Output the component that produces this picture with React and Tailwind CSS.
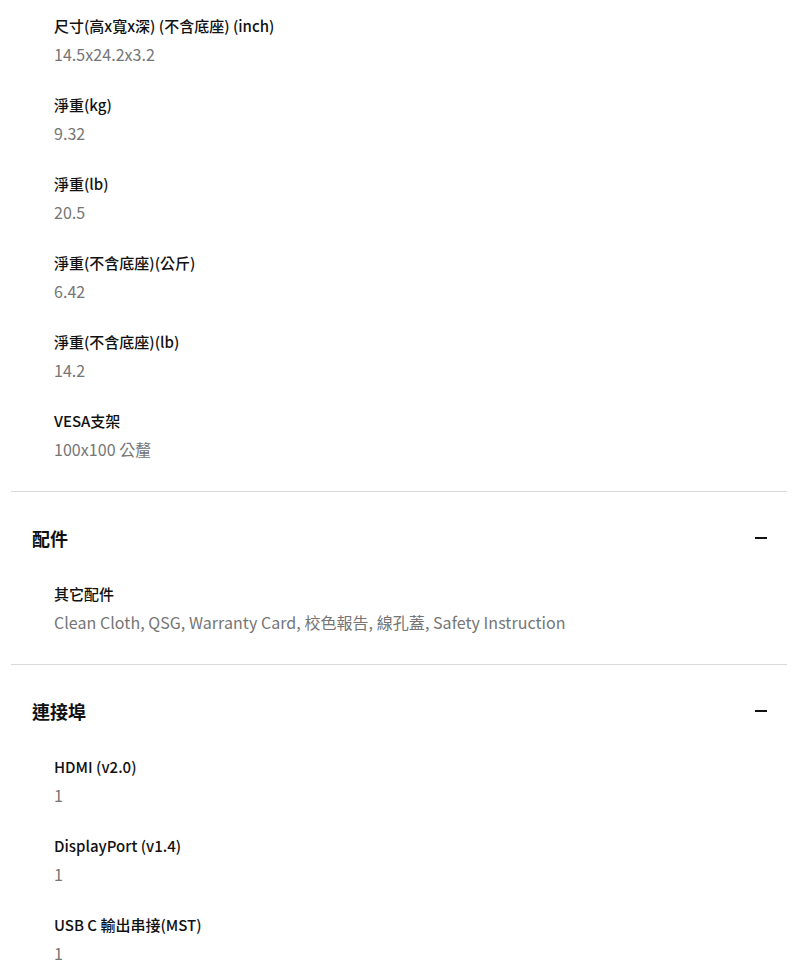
const font = { fontFamily: '"Noto Sans CJK TC", "Noto Sans", sans-serif' };

function Item({ label, value }) {
  return (
    <div className="flex flex-col pl-[54px] pb-[23px] last:pb-[28px]">
      <div className="text-[15px] leading-[28px] font-medium text-[#111111]">{label}</div>
      <div className="text-[16px] leading-[28px] text-[#757575] tracking-[0.05px]">{value}</div>
    </div>
  );
}

function Section({ title, children }) {
  return (
    <div className="border-t border-[#d9d9d9] ml-[11px] mr-[13px]">
      <div className="flex items-center justify-between pl-[21px] pr-[20px] pt-[32px] pb-[28px]">
        <div className="text-[18px] leading-[28px] font-bold text-[#111111]">{title}</div>
        <div className="w-[12px] h-[2px] bg-[#111111]" />
      </div>
      <div className="-ml-[11px]">{children}</div>
    </div>
  );
}

export default function App() {
  return (
    <div className="bg-white w-[800px] min-h-[975px]" style={font}>
      <div className="pt-[12px]">
        <Item label="尺寸(高x寬x深) (不含底座) (inch)" value="14.5x24.2x3.2" />
        <Item label="淨重(kg)" value="9.32" />
        <Item label="淨重(lb)" value="20.5" />
        <Item label="淨重(不含底座)(公斤)" value="6.42" />
        <Item label="淨重(不含底座)(lb)" value="14.2" />
        <Item label="VESA支架" value="100x100 公釐" />
      </div>
      <Section title="配件">
        <Item label="其它配件" value="Clean Cloth, QSG, Warranty Card, 校色報告, 線孔蓋, Safety Instruction" />
      </Section>
      <Section title="連接埠">
        <Item label="HDMI (v2.0)" value="1" />
        <Item label="DisplayPort (v1.4)" value="1" />
        <Item label="USB C 輸出串接(MST)" value="1" />
      </Section>
    </div>
  );
}
